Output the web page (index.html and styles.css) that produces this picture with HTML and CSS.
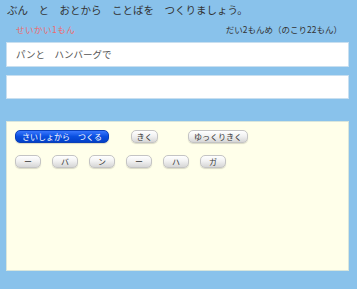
FILE: index.html
```html
<!DOCTYPE html>
<html lang="ja">
<head>
  <meta charset="UTF-8" />
  <title>ことばを つくりましょう</title>
  <link rel="stylesheet" href="styles.css">
</head>
<body>
  <div class="page">
    <h1 class="title">ぶん　と　おとから　ことばを　つくりましょう。</h1>

    <div class="status">
      <span class="score">せいかい1もん</span>
      <span class="count">だい2もんめ（のこり22もん）</span>
    </div>

    <div class="box sentence">パンと　ハンバーグで</div>
    <div class="box answer"></div>

    <div class="work">
      <div class="controls">
        <button class="btn btn-blue">さいしょから　つくる</button>
        <button class="btn btn-listen">きく</button>
        <button class="btn btn-slow">ゆっくりきく</button>
      </div>
      <div class="letters">
        <button class="btn letter">ー</button>
        <button class="btn letter">バ</button>
        <button class="btn letter">ン</button>
        <button class="btn letter">ー</button>
        <button class="btn letter">ハ</button>
        <button class="btn letter">ガ</button>
      </div>
    </div>
  </div>
</body>
</html>
```

FILE: styles.css
```css
body {
  margin: 0;
  padding: 0;
  background: #89c2eb;
  font-family: "Noto Sans CJK JP", "Noto Sans", sans-serif;
  color: #333;
}

.page {
  padding: 2px 8px 0 6px;
}

.title {
  margin: 0;
  padding-left: 1px;
  font-size: 10.5px;
  font-weight: normal;
  line-height: 16px;
  color: #333;
}

.status {
  display: flex;
  justify-content: space-between;
  padding: 4px 7px 0 10px;
  height: 20px;
  font-size: 8.5px;
  line-height: 14px;
}

.score {
  color: #f0686a;
  letter-spacing: 0.5px;
}

.count {
  color: #333;
}

.box {
  background: #fff;
  border: 1px solid #c8dff0;
  box-sizing: border-box;
}

.sentence {
  height: 25px;
  padding-left: 9px;
  font-size: 9.5px;
  line-height: 23px;
  color: #555;
}

.answer {
  margin-top: 8px;
  height: 24px;
}

.work {
  margin-top: 22px;
  height: 150px;
  box-sizing: border-box;
  background: #ffffea;
  border: 1px solid #d8e6dc;
  padding: 8px 0 0 8px;
}

.controls,
.letters {
  display: flex;
  align-items: center;
}

.letters {
  margin-top: 12px;
  gap: 11px;
}

.btn {
  font-family: inherit;
  font-size: 8px;
  line-height: 11px;
  height: 13px;
  padding: 0;
  white-space: nowrap;
  border: 1px solid #c4c4c4;
  border-radius: 5px;
  color: #333;
  background: linear-gradient(to bottom, #ffffff, #f2f2f2 45%, #d6d6d6);
  box-shadow: 0 1px 1px rgba(0, 0, 0, 0.15);
}

.btn-blue {
  width: 94px;
  color: #fff;
  border-color: #0a3fb8;
  background: linear-gradient(to bottom, #3a78ff, #0a4fe0 50%, #0340c8);
}

.btn-listen {
  margin-left: 22px;
  width: 27px;
}

.btn-slow {
  margin-left: 30px;
  width: 60px;
}

.letter {
  width: 26px;
}
```
